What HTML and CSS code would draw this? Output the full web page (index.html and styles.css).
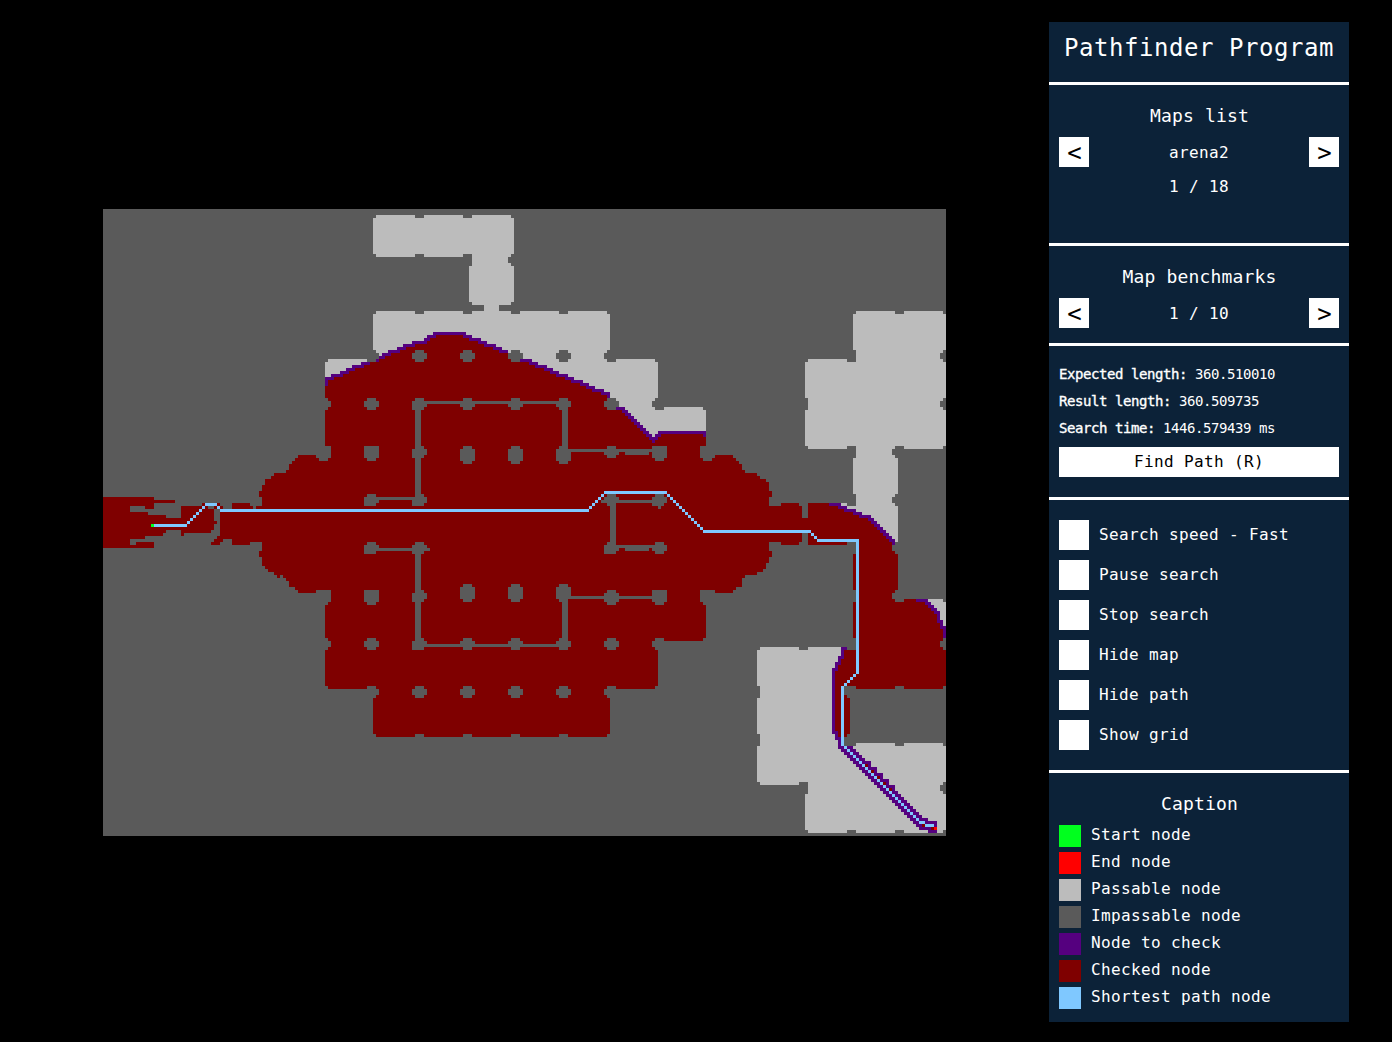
FILE: index.html
```html
<!DOCTYPE html>
<html lang="en">
<head>
<meta charset="utf-8">
<title>Pathfinder Program</title>
<link rel="stylesheet" href="styles.css">
</head>
<body>
<main class="app">
<section class="stage">
<svg class="map" viewBox="0 0 281 209" width="843" height="627" shape-rendering="crispEdges">
<defs>
<path id="p" d="M1 0h3v1h1v2h-1v1h-3v-1h-1v-2h1z"/>
<path id="q" d="M1 0h3v1h1v2h-1v1h-4v-3h1z"/>
<path id="s" d="M0 0h5v4h-1v1h-3v-1h-1z"/>
<path id="t" d="M1 0h3v1h1v4h-1v1h-3v-1h-1v-4h1z"/>
<path id="e" d="M1 0h1v4h-1v-1h-1v-2h1z"/>
</defs>
<rect class="wall" width="281" height="209"/>
<!-- explored floor -->
<path class="checked" d="M0 96H17V97H24V98H17V100H14V99H9V101H15V102H21V103H26V99H33V98H39V99H40V100H43V98H49V99H53V96H52V94H53V92H54V90H56V89H57V88H61V87H62V85H63V84H64V83H65V82H71V83H72V84H75V83H76V79H74V51H75V50H90V35H168V50H184V67H201V82H210V83H211V84H212V85H213V87H214V88H218V89H219V90H221V91H222V94H223V96H222V99H226V98H232V99H233V103H235V98H248V99H265V111H263V114H264V115H265V127H264V128H263V130H264V131H267V130H280V131H281V159H280V160H267V159H264V160H251V143H250V131H251V127H250V115H251V111H248V112H235V108H233V111H232V112H226V111H222V114H223V116H222V118H221V120H220V121H218V122H214V123H213V126H211V127H210V128H201V143H200V144H185V159H184V160H169V175H168V176H155V175H152V176H139V175H136V176H123V175H120V176H107V175H104V176H91V175H90V160H75V159H74V132H75V131H76V127H71V128H65V127H64V126H62V124H61V123H60V122H59V123H58V122H57V121H55V120H54V119H53V116H52V114H53V111H49V112H43V110H40V111H39V112H36V111H37V110H38V109H39V100H37V104H38V105H37V107H36V108H27V109H26V107H21V108H20V109H14V110H9V112H11V111H17V113H0Z"/>
<!-- unexplored floor -->
<path class="open" d="M91 2H104V3H107V2H120V3H123V2H136V3H137V15H136V16H135V18H136V19H137V31H136V32H132V34H136V35H139V34H152V35H155V34H168V35H169V50H184V51H185V66H200V67H201V74H185V75H184V76H183V75H182V74H181V73H180V72H179V71H178V70H177V69H176V68H175V67H174V66H172V64H169V61H167V60H164V59H162V58H160V57H157V56H155V55H152V54H150V53H148V52H145V51H143V50H135V47H133V46H131V45H128V44H126V43H123V42H121V41H110V42H108V43H107V44H103V45H100V46H98V47H95V48H93V49H91V47H90V35H91V34H104V35H107V34H120V35H123V34H127V32H123V31H122V19H123V15H120V16H107V15H104V16H91V15H90V3H91ZM74 56V51H75V50H88V51H86V52H83V53H81V54H79V55H76V56Z"/>
<path class="open" d="M251 34H264V35H267V34H280V35H281V79H280V80H267V79H264V80H263V82H264V83H265V95H264V96H263V98H264V99H265V111H264V110H263V109H262V108H261V107H260V106H259V105H258V104H257V103H256V102H253V101H251V100H248V99H246V98H248V99H251V95H250V83H251V79H248V80H235V79H234V67H235V63H234V51H235V50H248V51H251V47H250V35H251ZM275 130H280V131H281V139H280V137H279V134H278V133H277V132H276V131H275Z"/>
<path class="open" d="M219 146H232V147H235V146H247V179H251V178H264V179H267V178H280V179H281V207H280V208H267V207H264V208H251V207H248V208H235V207H234V195H235V191H232V192H219V191H218V179H219V175H218V163H219V159H218V147H219Z"/>
<path class="checked" d="M247 147H251V159H247V162H248V163H249V175H248V176H245V175H244V153H245V151H246V149H247Z"/>
<!-- search frontier -->
<path class="frontier" d="M74 56h2v1h-1v2h-1zM76 55h4v1h-4zM79 54h3v1h-3zM81 53h3v1h-3zM83 52h4v1h-4zM86 51h3v1h-3zM91 50h1v1h-1zM92 49h2v1h-2zM93 48h3v1h-3zM95 47h4v1h-4zM98 46h3v1h-3zM100 45h4v1h-4zM103 44h5v1h-5zM107 43h2v1h-2zM108 42h3v1h-3zM110 41h11v1h-11zM120 42h3v1h-3zM122 43h4v1h-4zM125 44h3v1h-3zM127 45h4v1h-4zM130 46h3v1h-3zM132 47h3v1h-3zM139 50h4v1h-4zM142 51h3v1h-3zM144 52h4v1h-4zM147 53h3v1h-3zM149 54h3v1h-3zM151 55h4v1h-4zM154 56h3v1h-3zM156 57h4v1h-4zM159 58h3v1h-3zM161 59h3v1h-3zM163 60h4v1h-4zM166 61h3v2h-1v-1h-2z"/>
<path class="frontier" d="M74 56h3v1h-3zM171 66h3v1h-3zM173 67h2v1h-2zM174 68h2v1h-2zM175 69h2v1h-2zM176 70h2v1h-2zM177 71h2v1h-2zM178 72h2v1h-2zM179 73h2v1h-2zM180 74h2v1h-2zM181 75h2v1h-2zM182 76h3v1h-1v1h-1v-1h-1zM184 75h2v1h-2zM185 74h16v2h-1v-1h-15z"/>
<path class="frontier" d="M242 98h4v1h-4zM245 99h3v1h-3zM247 100h4v1h-4zM250 101h3v1h-3zM252 102h4v1h-4zM255 103h2v1h-2zM256 104h2v1h-2zM257 105h2v1h-2zM258 106h2v1h-2zM259 107h2v1h-2zM260 108h2v1h-2zM261 109h2v1h-2zM262 110h2v2h-1v-1h-1zM271 130h4v1h-4zM274 131h2v1h-2zM275 132h2v1h-2zM276 133h2v1h-2zM277 134h2v3h1v2h1v4h-1v-3h-1v-2h-1v-3h-1z"/>
<path class="frontier" d="M246 146h2v1h-1v3h-1v2h-1v2h-1v20h1v2h1v3h-1v-2h-1v-2h-1v-22h1v-2h1v-2h1z"/>
<path class="frontier" d="M245 179h5v1h-5zM246 180h5v1h-5zM247 181h5v1h-5zM248 182h5v1h-5zM249 183h5v1h-5zM250 184h6v1h-6zM251 185h5v1h-5zM252 186h6v1h-6zM253 187h5v1h-5zM254 188h6v1h-6zM255 189h5v1h-5zM256 190h6v1h-6zM257 191h5v1h-5zM258 192h6v1h-6zM259 193h5v1h-5zM260 194h5v1h-5zM261 195h5v1h-5zM262 196h5v1h-5zM263 197h5v1h-5zM264 198h5v1h-5zM265 199h5v1h-5zM266 200h5v1h-5zM267 201h5v1h-5zM268 202h5v1h-5zM269 203h6v1h-6zM270 204h8v4h-3v-1h-3v-1h-1v-1h-1z"/>
<path class="checked" d="M254 185h1v1h-1zM256 187h1v1h-1zM258 189h1v1h-1zM260 191h1v1h-1zM262 193h1v1h-1zM273 205h1v1h-1zM276 206h1v1h-1z"/>
<!-- pillars and inner walls -->
<g class="wall">
<use href="#p" x="87" y="47"/><use href="#p" x="103" y="47"/><use href="#p" x="119" y="47"/><use href="#p" x="135" y="47"/><use href="#p" x="151" y="47"/><use href="#p" x="167" y="47"/>
<use href="#p" x="71" y="63"/><use href="#p" x="87" y="63"/><use href="#q" x="103" y="63"/><use href="#p" x="119" y="63"/><use href="#p" x="135" y="63"/><use href="#p" x="151" y="63"/><use href="#p" x="167" y="63"/><use href="#p" x="183" y="63"/>
<use href="#s" x="71" y="79"/><use href="#s" x="87" y="79"/><use href="#q" x="103" y="79"/><use href="#t" x="119" y="79"/><use href="#t" x="135" y="79"/><use href="#t" x="151" y="79"/><use href="#p" x="167" y="79"/><use href="#s" x="183" y="79"/><use href="#s" x="199" y="79"/>
<use href="#q" x="87" y="95"/><use href="#q" x="103" y="95"/><use href="#p" x="167" y="95"/><use href="#q" x="183" y="95"/>
<use href="#q" x="87" y="111"/><use href="#q" x="103" y="111"/><use href="#q" x="167" y="111"/><use href="#p" x="183" y="111"/>
<use href="#s" x="71" y="127"/><use href="#s" x="87" y="127"/><use href="#q" x="103" y="127"/><use href="#t" x="119" y="125"/><use href="#t" x="135" y="125"/><use href="#t" x="151" y="125"/><use href="#s" x="183" y="127"/><use href="#s" x="199" y="127"/>
<use href="#p" x="71" y="143"/><use href="#p" x="87" y="143"/><use href="#q" x="103" y="143"/><use href="#p" x="119" y="143"/><use href="#p" x="135" y="143"/><use href="#p" x="151" y="143"/><use href="#p" x="167" y="143"/><use href="#p" x="183" y="143"/>
<use href="#p" x="87" y="159"/><use href="#p" x="103" y="159"/><use href="#p" x="119" y="159"/><use href="#p" x="135" y="159"/><use href="#p" x="151" y="159"/><use href="#p" x="167" y="159"/>
<use href="#p" x="247" y="175"/>
<use href="#e" x="279" y="47"/><use href="#e" x="279" y="63"/><use href="#e" x="279" y="143"/><use href="#e" x="279" y="191"/>
<path d="M168 127h3v1h1v3h-1v1h-3v-1h-1v-3h1zM35 99h2v1h-2zM50 99h1v1h-1z"/>
<path d="M106 64h47v1h-47zM104 66h2v30h-2zM153 66h2v14h-2zM156 80h27v1h-27zM174 80h8v2h-8zM91 96h13v1h-13zM166 97h18v1h-18zM169 98h2v14h-2zM185 99h1v1h-1zM91 113h18v1h-18zM171 112h13v1h-13zM174 112h8v2h-8zM104 114h2v30h-2zM155 129h30v1h-30zM153 130h2v14h-2zM106 145h47v1h-47z"/>
</g>
<!-- shortest path -->
<path class="route" d="M17 105h11v1h-11zM28 104h1v1h-1zm1-1h1v1h-1zm1-1h1v1h-1zm1-1h1v1h-1zm1-1h1v1h-1zm1-1h1v1h-1zM34 98h4v1h-4zM38 99h1v1h-1zM39 100h123v1h-123zM162 99h1v1h-1zm1-1h1v1h-1zm1-1h1v1h-1zm1-1h1v1h-1zm1-1h1v1h-1zM167 94h21v1h-21zM188 95h1v1h-1zm1 1h1v1h-1zm1 1h1v1h-1zm1 1h1v1h-1zm1 1h1v1h-1zm1 1h1v1h-1zm1 1h1v1h-1zm1 1h1v1h-1zm1 1h1v1h-1zm1 1h1v1h-1zm1 1h1v1h-1zm1 1h1v1h-1zM200 107h36v1h-36zM236 108h1v1h-1zm1 1h1v1h-1zM238 110h14v45h-1v-44h-13zM250 155h1v1h-1zm-1 1h1v1h-1zm-1 1h1v1h-1zm-1 1h1v1h-1zM246 159h1v20h-1zM247 179h1v1h-1zm1 1h1v1h-1zm1 1h1v1h-1zm1 1h1v1h-1zm1 1h1v1h-1zm1 1h1v1h-1zm1 1h1v1h-1zm1 1h1v1h-1zm1 1h1v1h-1zm1 1h1v1h-1zm1 1h1v1h-1zm1 1h1v1h-1zm1 1h1v1h-1zm1 1h1v1h-1zm1 1h1v1h-1zm1 1h1v1h-1zm1 1h1v1h-1zm1 1h1v1h-1zm1 1h1v1h-1zm1 1h1v1h-1zm1 1h1v1h-1zm1 1h1v1h-1zm1 1h1v1h-1zm1 1h1v1h-1zm1 1h1v1h-1zM272 204h2v1h3v1h-3v-1h-2z"/>
<rect class="start" x="16" y="105" width="1" height="1"/>
<rect class="end" x="277" y="206" width="1" height="1"/>
</svg>
</section>
<aside class="panel">
<header class="block title-block"><h1>Pathfinder Program</h1></header>
<section class="block maps">
<h2>Maps list</h2>
<div class="picker"><button class="arrow">&lt;</button><span>arena2</span><button class="arrow">&gt;</button></div>
<p class="count">1 / 18</p>
</section>
<section class="block benchmarks">
<h2>Map benchmarks</h2>
<div class="picker"><button class="arrow">&lt;</button><span>1 / 10</span><button class="arrow">&gt;</button></div>
</section>
<section class="block results">
<p><b>Expected length:</b> 360.510010</p>
<p><b>Result length:</b> 360.509735</p>
<p><b>Search time:</b> 1446.579439 ms</p>
<button class="find">Find Path (R)</button>
</section>
<section class="block options">
<label><i class="box"></i>Search speed - Fast</label>
<label><i class="box"></i>Pause search</label>
<label><i class="box"></i>Stop search</label>
<label><i class="box"></i>Hide map</label>
<label><i class="box"></i>Hide path</label>
<label><i class="box"></i>Show grid</label>
</section>
<section class="block caption">
<h2>Caption</h2>
<ul>
<li><i class="swatch c-start"></i>Start node</li>
<li><i class="swatch c-end"></i>End node</li>
<li><i class="swatch c-open"></i>Passable node</li>
<li><i class="swatch c-wall"></i>Impassable node</li>
<li><i class="swatch c-frontier"></i>Node to check</li>
<li><i class="swatch c-checked"></i>Checked node</li>
<li><i class="swatch c-route"></i>Shortest path node</li>
</ul>
</section>
</aside>
</main>
</body>
</html>
```
FILE: styles.css
```css
:root {
  --start: #00ff1e;
  --end: #ff0000;
  --open: #bcbcbc;
  --wall: #5a5a5a;
  --frontier: #55007f;
  --checked: #7f0000;
  --route: #7fc8ff;
}
* { box-sizing: border-box; margin: 0; padding: 0; }
body {
  background: #000;
  color: #fff;
  font: 16px/20px "DejaVu Sans Mono", monospace;
  letter-spacing: 0.37px;
  overflow: hidden;
}
.app { display: flex; height: 1042px; padding: 22px 43px 20px 0; }
.stage { flex: 1; padding: 187px 0 0 103px; }
.map { display: block; }
.wall { fill: var(--wall); }
.open { fill: var(--open); }
.checked { fill: var(--checked); }
.frontier { fill: var(--frontier); }
.route { fill: var(--route); }
.start { fill: var(--start); }
.end { fill: var(--end); }

.panel { display: flex; flex-direction: column; width: 300px; background: #0c2238; }
.block { padding: 0 10px; border-bottom: 3px solid #fff; }
.block:last-child { border-bottom: 0; }
h1 { font-size: 24px; line-height: 52px; font-weight: 400; letter-spacing: 0.55px; text-align: center; white-space: nowrap; margin: 0 -10px; }
h2 { font-size: 18px; line-height: 22px; font-weight: 400; letter-spacing: 0.16px; text-align: center; padding-left: 1px; }
.title-block { height: 63px; }
.maps { height: 161px; padding-top: 20px; }
.benchmarks { height: 100px; padding-top: 20px; }
.picker { display: flex; justify-content: space-between; height: 30px; line-height: 32px; margin-top: 10px; }
.arrow {
  width: 30px;
  height: 30px;
  padding: 1px 0 0 1px;
  border: 0;
  background: #fff;
  color: #000;
  font: 24px/30px "DejaVu Sans Mono", monospace;
}
.count { text-align: center; margin-top: 10px; }
.results { height: 154px; padding-top: 15px; }
.results p { font-size: 14px; line-height: 27px; letter-spacing: -0.43px; white-space: nowrap; }
.results b { font-weight: 400; -webkit-text-stroke: 0.35px #fff; }
.find {
  display: block;
  width: 100%;
  height: 30px;
  margin-top: 5px;
  border: 0;
  background: #fff;
  color: #000;
  font: 16px/30px "DejaVu Sans Mono", monospace;
  letter-spacing: 0.37px;
}
.options { display: flex; flex-direction: column; gap: 10px; height: 273px; padding-top: 20px; }
.options label { display: flex; gap: 10px; height: 30px; line-height: 30px; }
.box { width: 30px; height: 30px; background: #fff; }
.caption { padding-top: 20px; }
.caption ul { list-style: none; margin-top: 10px; }
.caption li { display: flex; gap: 10px; height: 27px; line-height: 20px; }
.swatch { width: 22px; height: 22px; }
.c-start { background: var(--start); }
.c-end { background: var(--end); }
.c-open { background: var(--open); }
.c-wall { background: var(--wall); }
.c-frontier { background: var(--frontier); }
.c-checked { background: var(--checked); }
.c-route { background: var(--route); }
```
